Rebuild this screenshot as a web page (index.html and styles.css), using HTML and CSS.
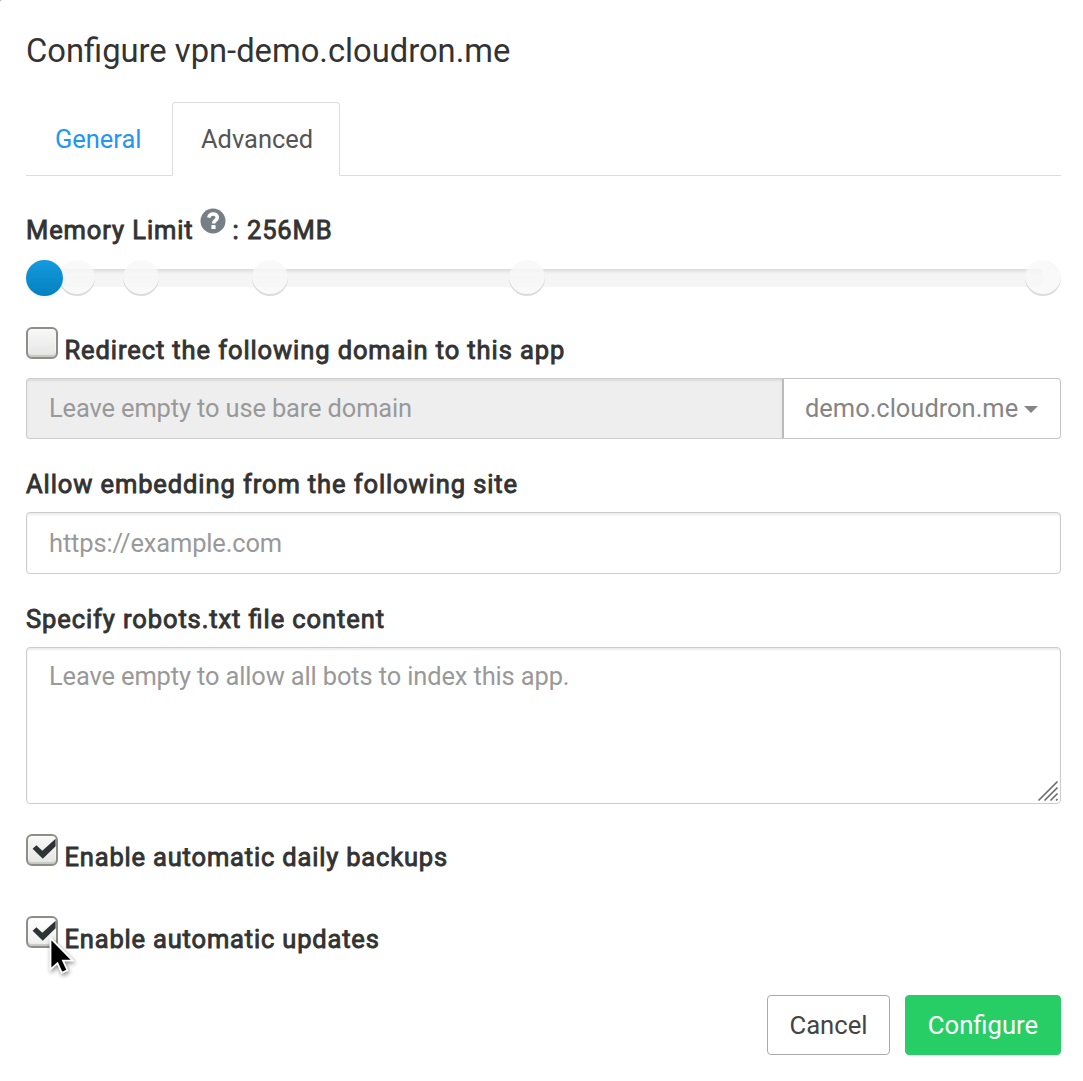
FILE: index.html
```html
<!DOCTYPE html>
<html lang="en">
<head>
<meta charset="utf-8">
<title>Configure vpn-demo.cloudron.me</title>
<link rel="stylesheet" href="styles.css">
</head>
<body>
<main class="dialog">
  <h1 class="title">Configure vpn-demo.cloudron.me</h1>
  <nav class="tabs">
    <a class="tab">General</a>
    <a class="tab active">Advanced</a>
  </nav>

  <div class="label memory"><span>Memory Limit</span>
    <svg class="help" viewBox="0 0 26 26"><circle cx="13" cy="13" r="12.5" fill="#777f86"/><path d="M8.7 9.6C9.4 6.9 11 5.9 13.1 5.9c2.5 0 4.2 1.5 4.2 3.6 0 3.2-3.7 2.8-3.7 5.9" fill="none" stroke="#fff" stroke-width="3.5"/><rect x="11.4" y="17.1" width="4.2" height="3.9" rx=".6" fill="#fff"/></svg>
    <span>: 256MB</span></div>

  <div class="slider">
    <div class="track"></div>
    <i class="knob" style="left:32.5px"></i>
    <i class="knob" style="left:97px"></i>
    <i class="knob" style="left:226px"></i>
    <i class="knob" style="left:483px"></i>
    <i class="knob" style="left:998.5px"></i>
    <i class="knob current" style="left:0"></i>
  </div>

  <label class="check redirect"><span class="box"></span><span class="label">Redirect the following domain to this app</span></label>
  <div class="group">
    <div class="field disabled">Leave empty to use bare domain</div>
    <div class="dropdown"><span>demo.cloudron.me</span><i class="caret"></i></div>
  </div>

  <div class="label embed">Allow embedding from the following site</div>
  <div class="field">https://example.com</div>

  <div class="label robots">Specify robots.txt file content</div>
  <div class="field area">Leave empty to allow all bots to index this app.
    <svg class="grip" viewBox="0 0 22 22"><path d="M1.5 20.5 20.5 1.5M7.5 20.5l13-13M13.5 20.5l7-7M19 20.5l1.5-1.5" stroke="#6d6d6d" stroke-width="1.7" fill="none"/></svg>
  </div>

  <label class="check backups"><span class="box"><svg class="tick" viewBox="0 0 32 32"><path d="M6.6 14.8 10.4 11.2l5.9 5.6L29.6 4.8v7.4L16.8 24.8z" fill="#2e3436"/></svg></span><span class="label">Enable automatic daily backups</span></label>
  <label class="check updates"><span class="box hover"><svg class="tick" viewBox="0 0 32 32"><path d="M6.6 14.8 10.4 11.2l5.9 5.6L29.6 4.8v7.4L16.8 24.8z" fill="#2e3436"/></svg></span><span class="label">Enable automatic updates</span></label>

  <footer class="actions">
    <button class="btn cancel">Cancel</button>
    <button class="btn primary">Configure</button>
  </footer>
</main>
<svg class="cursor" viewBox="0 0 28 40"><path d="M2.5 3v31.5l7-6.3 4.3 9.6 5.6-2.6-4.4-9.5h9.7z" fill="#000" stroke="#fff" stroke-width="1.8"/></svg>
</body>
</html>
```
FILE: styles.css
```css
* { box-sizing: border-box; }
body { margin: 0; background: #999; color: #333; font: 25.45px/36px Roboto, sans-serif; }
.dialog { display: flex; flex-direction: column; height: 1081px; padding: 31px 22px 0 26px; background: #fff; border-top-left-radius: 2px; }
.title { margin: 0; font-size: 32.73px; line-height: 40px; font-weight: 400; }
.tabs { display: flex; height: 74px; margin-top: 31px; border-bottom: 1px solid #ddd; }
.tab { height: 74px; padding: 18px 28px 0; border: 1px solid transparent; color: #2196f3; }
.tab:first-child { width: 146px; }
.tab.active { width: 168px; color: #555; background: #fff; border-color: #ddd #ddd #fff; border-radius: 4px 4px 0 0; }
.label { height: 36px; font-size: 25.5px; font-weight: 400; letter-spacing: .9px; -webkit-text-stroke: .9px #333; font-feature-settings: "liga" 1; white-space: nowrap; }
.memory { display: flex; margin-top: 36px; }
.help { width: 26px; height: 26px; margin: -4px 7px 0 6px; }
.slider { position: relative; height: 36px; margin-top: 12px; }
.track { position: relative; top: 9px; width: 1017px; height: 18px; border-radius: 9px 5px 5px 9px; background: #f5f5f5; box-shadow: inset 0 4px 4px -2px rgba(0,0,0,.12); }
.knob { position: absolute; top: 0; width: 36px; height: 36px; border-radius: 50%; background: rgba(247,247,247,.8); box-shadow: inset 0 -2px 0 rgba(0,0,0,.12); }
.knob.current { width: 37px; background: linear-gradient(#149bdf, #0480be); box-shadow: 0 2px 4px rgba(0,0,0,.06); }
.check { display: flex; height: 42px; gap: 6.5px; }
.check .label { margin-top: 5px; }
.redirect { margin-top: 31px; }
.box { width: 32px; height: 32px; border: 2px solid #8d8e87; border-radius: 6px; background: linear-gradient(#f8f8f8, #e5e5e4); box-shadow: inset 0 -2px 1px #c8c9c4, inset 0 0 0 1px #fafafa; }
.box.hover { background: linear-gradient(#fff, #efefee); }
.tick { display: block; width: 32px; height: 32px; margin: -2px; filter: blur(.7px); }
.group { display: flex; margin-top: 9px; height: 61px; }
.field { height: 62px; padding: 12px 22px; border: 1px solid #ccc; border-radius: 4px; color: #999; background: #fff; box-shadow: inset 0 2px 2px rgba(0,0,0,.075); letter-spacing: -.13px; white-space: nowrap; }
.disabled { width: 756px; height: 61px; padding-top: 11px; background: #eee; border-right: 0; border-radius: 4px 0 0 4px; }
.dropdown { display: flex; align-items: center; width: 279px; height: 61px; padding: 0 0 1px 21px; border: 1px solid #c4c4c4; border-left: 2px solid #bbb; border-radius: 0 4px 4px 0; color: #858585; }
.caret { margin: 2px 0 0 6px; border: 7px solid transparent; border-top-color: #858585; border-bottom: 0; }
.embed { margin-top: 27px; margin-bottom: 10px; }
.robots { margin-top: 27px; margin-bottom: 10px; }
.area { position: relative; height: 157px; padding-top: 10px; }
.grip { position: absolute; right: 1px; bottom: 1px; width: 22px; height: 22px; }
.backups { margin-top: 30px; }
.backups .label, .updates .label { letter-spacing: .82px; }
.updates { margin-top: 40px; }
.actions { display: flex; justify-content: flex-end; gap: 15px; margin-top: 37px; }
.btn { height: 60px; padding: 0; border: 1px solid #aaa; border-radius: 4px; font: inherit; font-size: 25.67px; }
.cancel { width: 123px; background: #fff; color: #444; }
.primary { width: 156px; background: #27ce65; border-color: #27ce65; color: #fff; }
.cursor { position: absolute; left: 47.5px; top: 935px; width: 28px; height: 40px; filter: drop-shadow(1px 2px 2px rgba(0,0,0,.45)); }
```
